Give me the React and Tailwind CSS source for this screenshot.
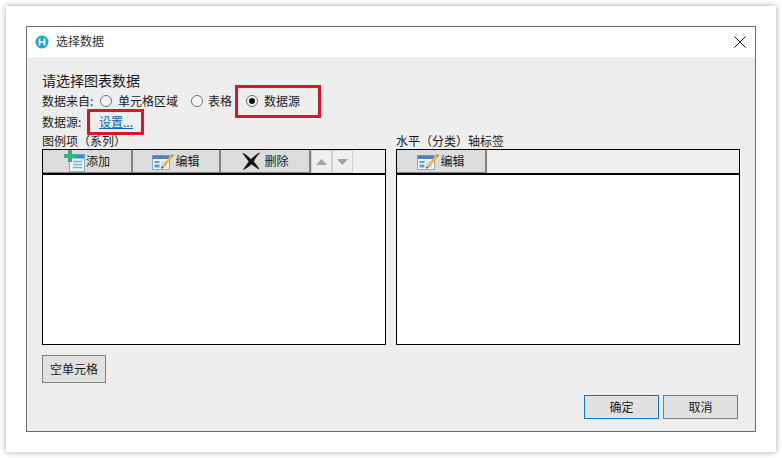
function Radio({ checked }) {
  return (
    <span className="flex h-[12px] w-[12px] shrink-0 items-center justify-center rounded-full border border-[#6f6f6f] bg-[#f6f6f6]">
      {checked && <span className="h-[6px] w-[6px] rounded-full bg-[#111]" />}
    </span>
  );
}

function LogoIcon() {
  return (
    <svg width="14" height="14" viewBox="0 0 14 14">
      <circle cx="7" cy="7" r="6.5" fill="#19a7cf" />
      <path d="M4.5 3.5v7M9.5 3.5v7M4.5 7h5" stroke="#fff" strokeWidth="1.7" fill="none" />
    </svg>
  );
}

function AddIcon() {
  return (
    <svg width="22" height="22" viewBox="0 0 22 22">
      <rect x="5.5" y="4.5" width="15" height="17" fill="#eef6fb" stroke="#7fb2d6" />
      <rect x="5.5" y="4.5" width="15" height="4" fill="#2f8fd0" />
      <path d="M9 11.5h9M9 14.5h9M9 17.5h9" stroke="#6fb5e0" strokeWidth="1.4" />
      <path d="M4 0h4v4h4v4H8v4H4V8H0V4h4z" fill="#36b37e" />
    </svg>
  );
}

function EditIcon() {
  return (
    <svg width="22" height="18" viewBox="0 0 22 18">
      <rect x="0.5" y="3.5" width="17" height="14" fill="#f2f7fb" stroke="#8fa9c2" />
      <rect x="0.5" y="3.5" width="17" height="3.5" fill="#4f81bd" />
      <rect x="2.5" y="9" width="5" height="2" fill="#5b9bd5" />
      <rect x="2.5" y="12.5" width="5" height="3" fill="#5b9bd5" />
      <rect x="9" y="9" width="6" height="6.5" fill="#cfe0ee" />
      <path d="M9.5 14.5 L18.5 3.5 L20.5 5.2 L11.5 16 L9 16.5z" fill="#f2b632" />
      <path d="M18.5 3.5 L20 1.8 L22 3.5 L20.5 5.2z" fill="#e8762c" />
      <path d="M9 16.5 L9.5 14.5 L11.5 16z" fill="#444" />
    </svg>
  );
}

function DeleteIcon() {
  return (
    <svg width="20" height="18" viewBox="0 0 20 18">
      <path d="M2 1.5 C6 3 8 6 10 7.5 C12.5 5 15 3 18.5 1 C15.5 4 13.5 7 12.5 9.5 C14.5 12 16.5 14.5 18 17 C15 15.5 12.5 13.5 10.5 12 C8 14 5.5 16 2.5 17.5 C4.5 14.5 6.5 12 8 9.5 C6 7 4 4 2 1.5z" fill="#111" stroke="#111" strokeWidth="0.8" />
    </svg>
  );
}

function ToolButton({ icon, label, width, gap = "gap-[3px]" }) {
  return (
    <div className={`flex h-full items-center justify-center border-r-2 border-b border-[#808080] bg-[#dcdcdc] pb-[1px] ${gap} ${width}`}>
      {icon}
      <span className="leading-[16px]">{label}</span>
    </div>
  );
}

function Arrow({ up }) {
  return (
    <div className="flex h-full w-[21px] items-center justify-center border border-[#d0d0d0] bg-[#efefef]">
      <svg width="11" height="6" viewBox="0 0 11 6">
        <path d={up ? "M5.5 0 L11 6 H0z" : "M0 0 H11 L5.5 6z"} fill="#a3a3a3" />
      </svg>
    </div>
  );
}

function Panel({ label, children }) {
  return (
    <div className="w-[344px]">
      <div className="flex h-[16px] items-center leading-[16px]">{label}</div>
      <div className="flex h-[196px] flex-col border border-black bg-white">
        <div className="flex h-[25px] items-stretch border-b-2 border-black bg-[#efefef]">
          <div className="flex h-[23px] w-full items-center">{children}</div>
        </div>
      </div>
    </div>
  );
}

export default function App() {
  return (
    <div
      className="h-[458px] w-[782px] overflow-hidden bg-white pt-[6px] pl-[6px] text-[12px] text-[#1a1a1a]"
      style={{ fontFamily: '"Noto Sans CJK SC", "Liberation Sans", sans-serif' }}
    >
      <div className="h-[446px] w-[770px] bg-white pt-[20px] pl-[20px] shadow-[0_0_6px_rgba(0,0,0,0.35)]">
        <div className="relative flex h-[406px] w-[730px] flex-col border border-[#6e6e6e] bg-[#eeeeee]">
          <div className="flex h-[30px] shrink-0 items-center justify-between bg-white pr-[8px] pl-[8px]">
            <div className="flex items-center gap-[7px]">
              <LogoIcon />
              <span className="mb-[2px] text-[#333]">选择数据</span>
            </div>
            <svg width="12" height="12" viewBox="0 0 12 12" className="mr-[1px] mb-[1px]">
              <path d="M0.5 0.5 L11.5 11.5 M11.5 0.5 L0.5 11.5" stroke="#111" strokeWidth="1" />
            </svg>
          </div>

          <div className="flex flex-1 flex-col pt-[14px] pr-[15px] pl-[15px]">
            <div className="flex h-[18px] items-center text-[14px] leading-[18px]">请选择图表数据</div>
            <div className="mt-[3px] flex h-[18px] items-center">
              <span className="w-[58px]">数据来自:</span>
              <Radio />
              <span className="ml-[6px] w-[73px]">单元格区域</span>
              <Radio />
              <span className="ml-[5px] w-[38px]">表格</span>
              <Radio checked />
              <span className="ml-[6px]">数据源</span>
            </div>
            <div className="mt-[3px] flex h-[18px] items-center">
              <span className="w-[57px]">数据源:</span>
              <span className="text-[#0a63b8] underline">设置...</span>
            </div>
            <div className="mt-[2px] flex gap-[10px]">
              <Panel label="图例项（系列）">
                <ToolButton icon={<AddIcon />} label="添加" width="w-[90px]" gap="gap-0" />
                <ToolButton icon={<EditIcon />} label="编辑" width="w-[88px]" gap="gap-[1px]" />
                <ToolButton icon={<DeleteIcon />} label="删除" width="w-[90px]" />
                <div className="flex h-full gap-0">
                  <Arrow up />
                  <div className="w-[22px] h-full flex"><Arrow /></div>
                </div>
              </Panel>
              <Panel label="水平（分类）轴标签">
                <ToolButton icon={<EditIcon />} label="编辑" width="w-[90px]" gap="gap-[1px]" />
              </Panel>
            </div>
            <div className="mt-[10px]">
              <button className="h-[28px] w-[64px] border border-[#808080] bg-[#e1e1e1] pb-[1px] text-[12px]">空单元格</button>
            </div>
            <div className="mt-[12px] flex justify-end gap-[4px] pr-[2px]">
              <button className="h-[24px] w-[75px] border border-[#0078d7] bg-[#e1e1e1] text-[12px]">确定</button>
              <button className="h-[24px] w-[75px] border border-[#7a7a7a] bg-[#e1e1e1] text-[12px]">取消</button>
            </div>
          </div>

          <div className="absolute top-[58px] left-[208px] h-[33px] w-[86px] border-[3px] border-[#d6182a]" />
          <div className="absolute top-[82px] left-[60px] h-[26px] w-[57px] border-[3px] border-[#d6182a]" />
        </div>
      </div>
    </div>
  );
}
